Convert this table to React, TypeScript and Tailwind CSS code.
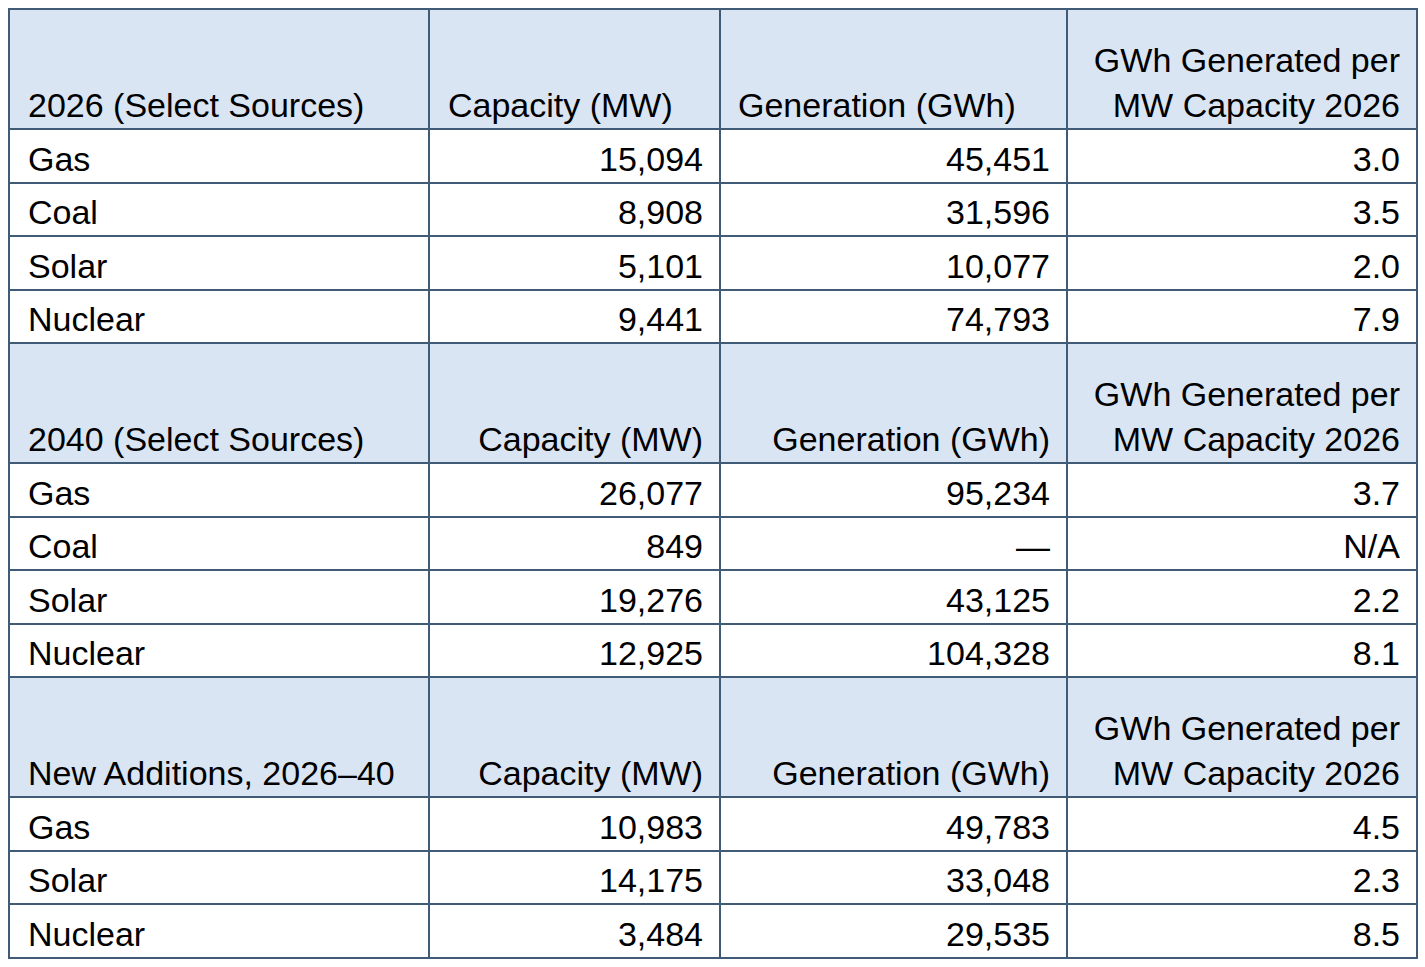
const sections = [
  {
    title: "2026 (Select Sources)",
    leftHeads: true,
    rows: [
      ["Gas", "15,094", "45,451", "3.0"],
      ["Coal", "8,908", "31,596", "3.5"],
      ["Solar", "5,101", "10,077", "2.0"],
      ["Nuclear", "9,441", "74,793", "7.9"],
    ],
  },
  {
    title: "2040 (Select Sources)",
    leftHeads: false,
    rows: [
      ["Gas", "26,077", "95,234", "3.7"],
      ["Coal", "849", "—", "N/A"],
      ["Solar", "19,276", "43,125", "2.2"],
      ["Nuclear", "12,925", "104,328", "8.1"],
    ],
  },
  {
    title: "New Additions, 2026–40",
    leftHeads: false,
    rows: [
      ["Gas", "10,983", "49,783", "4.5"],
      ["Solar", "14,175", "33,048", "2.3"],
      ["Nuclear", "3,484", "29,535", "8.5"],
    ],
  },
];

const cell = "border-2 border-[#3f5b75] align-bottom";

export default function App() {
  return (
    <div className="min-h-screen bg-white pt-[8px] pl-[8px] font-['Liberation_Sans',Arial,sans-serif] text-[34px] leading-[45px] text-black">
      <table className="table-fixed border-collapse w-[1408px]">
        <colgroup>
          <col className="w-[420px]" />
          <col className="w-[291px]" />
          <col className="w-[347px]" />
          <col className="w-[350px]" />
        </colgroup>
        <tbody>
          {sections.map((s) => (
            <>
              <tr key={s.title} className="h-[120px] bg-[#dae5f3]">
                <td className={`${cell} pl-[18px]`}>{s.title}</td>
                <td className={`${cell} ${s.leftHeads ? "pl-[18px] text-left" : "pr-[16px] text-right"}`}>Capacity (MW)</td>
                <td className={`${cell} ${s.leftHeads ? "pl-[17px] text-left" : "pr-[16px] text-right"}`}>Generation (GWh)</td>
                <td className={`${cell} pr-[16px] text-right`}>
                  GWh Generated per
                  <br />
                  MW Capacity 2026
                </td>
              </tr>
              {s.rows.map((r) => (
                <tr key={s.title + r[0]} className="h-[53.5px] bg-white">
                  <td className={`${cell} pl-[18px]`}>{r[0]}</td>
                  <td className={`${cell} pr-[16px] text-right`}>{r[1]}</td>
                  <td className={`${cell} pr-[16px] text-right`}>{r[2]}</td>
                  <td className={`${cell} pr-[16px] text-right`}>{r[3]}</td>
                </tr>
              ))}
            </>
          ))}
        </tbody>
      </table>
    </div>
  );
}
